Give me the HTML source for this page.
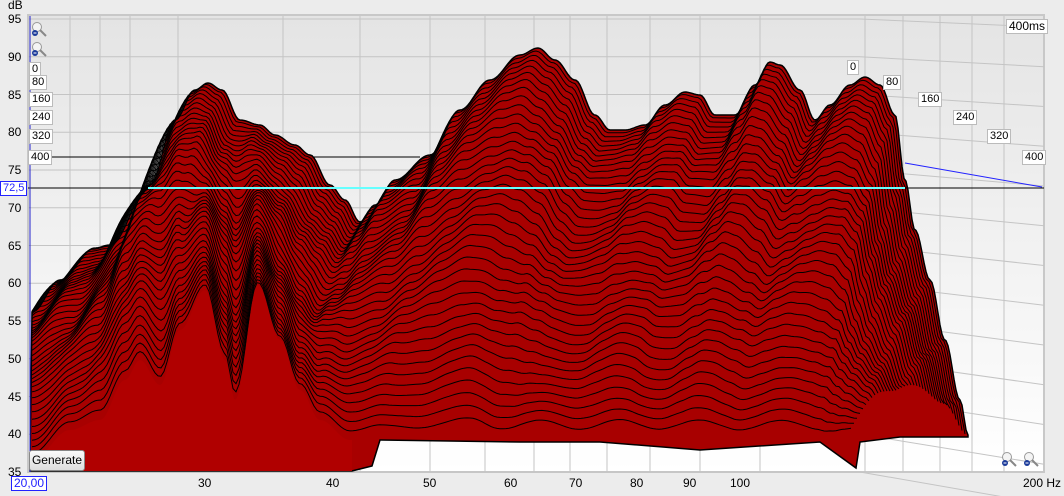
<!DOCTYPE html><html><head><style>
body{margin:0;width:1064px;height:496px;background:#ececec;font-family:"Liberation Sans",sans-serif;overflow:hidden;position:relative}
.l{position:absolute;font-size:12px;color:#000}
.bx{position:absolute;font-size:11px;background:#fff;border:1px solid #bbb;padding:0 2px;line-height:13px}
</style></head><body>
<svg width="1064" height="496" style="position:absolute;left:0;top:0">
<defs><linearGradient id="bg" x1="0" y1="0" x2="0" y2="1"><stop offset="0" stop-color="#e4e4e4"/><stop offset="1" stop-color="#ffffff"/></linearGradient>
<g id="mg"><circle cx="5" cy="5" r="4.5" fill="#f4f4f4" stroke="#999"/><line x1="8" y1="8" x2="14" y2="14" stroke="#888" stroke-width="2"/><circle cx="3" cy="11" r="3" fill="#1a3a9a"/><line x1="1.5" y1="11" x2="4.5" y2="11" stroke="#fff"/></g></defs>
<rect x="28" y="15" width="1016" height="457" fill="url(#bg)" stroke="#c8c8c8" stroke-width="2"/>
<g id="grid" stroke="#c4c4c4" stroke-width="1" fill="none"></g>
<line x1="28" y1="157" x2="420" y2="157" stroke="#000"/>
<g id="wf"></g>
<line x1="28" y1="188" x2="1044" y2="188" stroke="#000"/>
<line x1="148" y1="188" x2="905" y2="188" stroke="#6ff" stroke-width="2"/>
<line x1="905" y1="163" x2="1042" y2="187" stroke="#22f"/>
<line x1="30" y1="16" x2="30" y2="472" stroke="#22c"/>
<use href="#mg" x="32" y="22"/><use href="#mg" x="32" y="42"/>
<use href="#mg" x="1002" y="452"/><use href="#mg" x="1024" y="452"/>
</svg>
<div class="l" style="left:8px;top:-2px">dB</div>
<div id="ylab"></div>
<div class="bx" style="left:29px;top:62px">0</div>
<div class="bx" style="left:29px;top:75px">80</div>
<div class="bx" style="left:29px;top:92px">160</div>
<div class="bx" style="left:29px;top:110px">240</div>
<div class="bx" style="left:29px;top:129px">320</div>
<div class="bx" style="left:28px;top:150px">400</div>
<div class="bx" style="left:847px;top:60px">0</div>
<div class="bx" style="left:883px;top:75px">80</div>
<div class="bx" style="left:918px;top:92px">160</div>
<div class="bx" style="left:953px;top:110px">240</div>
<div class="bx" style="left:987px;top:129px">320</div>
<div class="bx" style="left:1022px;top:150px">400</div>
<div class="bx" style="left:1006px;top:19px;font-size:12px">400ms</div>
<div class="bx" style="left:0;top:181px;color:#22f;border-color:#22f;font-size:11px">72,5</div>
<div class="bx" style="left:11px;top:476px;color:#22f;border-color:#22f;font-size:12px">20,00</div>
<div style="position:absolute;left:29px;top:450px;width:54px;height:19px;border:1px solid #888;border-radius:3px;background:linear-gradient(#fafafa,#ddd);font-size:12px;text-align:center;line-height:19px">Generate</div>
<div id="xlab"></div>
<script>
var ylab='';for(var d=95,i=0;d>=35;d-=5,i++){var y=19+i*37.75;ylab+='<div class="l" style="left:8px;top:'+(y-7)+'px">'+d+'</div>';}
document.getElementById('ylab').innerHTML=ylab;
var xs=[[205,'30'],[333,'40'],[430,'50'],[511,'60'],[576,'70'],[637,'80'],[690,'90'],[737,'100'],[1030,'200 Hz']],xl='';
xs.forEach(function(a){xl+='<div class="l" style="left:'+(a[0]-7)+'px;top:476px">'+a[1]+'</div>';});
document.getElementById('xlab').innerHTML=xl;
var g='',vx=[70,100,130,178,283,360,430,485,534,570,607,650,700,760,865,903,940,972,1004];
vx.forEach(function(x){g+='<line x1="'+x+'" y1="16" x2="'+x+'" y2="472"/>';});
for(var i=0;i<13;i++){var y=19+i*37.75;g+='<line x1="28" y1="'+y+'" x2="860" y2="'+y+'"/><line x1="860" y1="'+y+'" x2="1044" y2="'+(y+i*2+8)+'"/>';}
document.getElementById('grid').innerHTML=g;
var TP=[[32,312],[60,280],[95,248],[110,245],[150,185],[175,120],[195,90],[208,83],[222,90],[240,120],[260,125],[275,135],[295,145],[310,155],[330,185],[345,200],[360,222],[375,205],[395,180],[430,155],[460,110],[490,80],[520,55],[538,48],[555,60],[575,80],[595,115],[610,130],[625,130],[645,125],[665,105],[685,92],[700,95],[715,115],[735,115],[755,85],[770,62],[780,65],[800,90],[815,120],[830,105],[850,85],[865,77],[880,85],[895,115],[905,180],[915,230],[930,280],[945,340],[960,400],[968,435]];
var BT=[[32,460],[70,430],[100,420],[125,380],[140,360],[160,385],[180,330],[205,290],[225,360],[235,400],[258,285],[280,340],[300,390],[320,420],[350,440],[380,435],[420,440],[470,430],[500,440],[540,430],[580,440],[620,430],[660,440],[700,432],[740,440],[780,432],[820,440],[860,432],[900,435],[940,435],[968,435]];
function f(p,x){if(x<=p[0][0])return p[0][1];for(var i=0;i<p.length-1;i++){if(x<=p[i+1][0]){var t=(x-p[i][0])/(p[i+1][0]-p[i][0]);t=(1-Math.cos(t*Math.PI))/2;return p[i][1]+t*(p[i+1][1]-p[i][1]);}}return p[p.length-1][1];}
var tp=[];for(var x=32;x<=968;x+=2)tp.push(x+','+f(TP,x).toFixed(1));
var s='<path fill="#a80000" stroke="#000" stroke-width="1.5" d="M30,470 L'+tp.join(' L');
s+=' L968,437 L900,437 L860,442 L856,468 L820,442 L700,450 L600,442 L520,442 L380,440 L372,466 L352,471 L30,471Z"/>';
var N=40;
for(var k=1;k<N;k++){var pts=[],t=k/N;var x0=32,x1=968-k*3;
for(var x=x0;x<=x1;x+=3){var a=f(TP,x+k*2),b=f(BT,x);var y=a+(b-a)*Math.pow(t,1.3)+Math.sin(x/19+k*0.5)*7*t*(1-t)*2;if(y>b)y=b;pts.push(x+','+y.toFixed(1));}
s+='<path fill="none" stroke="#000" stroke-width="1" d="M'+pts.join(' L')+'"/>';}
var bp=[];for(var x=32;x<=352;x+=2)bp.push(x+','+f(BT,x).toFixed(1));
s+='<path fill="#b00000" d="M32,471 L'+bp.join(' L')+' L352,471Z"/>';
document.getElementById('wf').innerHTML=s;
</script>
</body></html>
